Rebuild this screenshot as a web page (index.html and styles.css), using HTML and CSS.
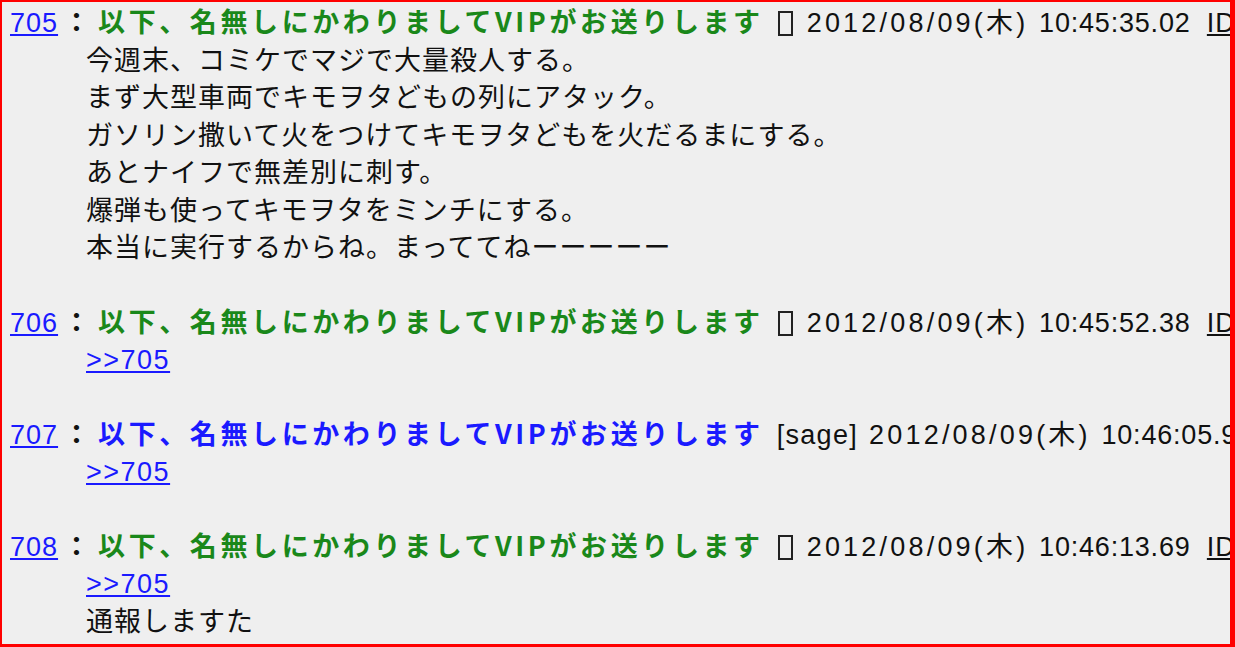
FILE: index.html
```
<!DOCTYPE html>
<html>
<head>
    <title>VIP スレ</title>
    <meta charset="utf-8">
    <link rel="stylesheet" href="styles.css">
</head>
<body>
    <div class="thread">
        <dl>
            <dt><a href="#" class="num">705</a><span class="colon">：</span><b class="name">以下、名無しにかわりましてVIPがお送りします</b><span class="tofu"></span><span class="date"><span class="day">2012/08/09(木) </span>10:45:35.02 <span class="id">ID:Kx9mQ2rT0</span></span></dt>
            <dd>
                今週末、コミケでマジで大量殺人する。<br>
                まず大型車両でキモヲタどもの列にアタック。<br>
                ガソリン撒いて火をつけてキモヲタどもを火だるまにする。<br>
                あとナイフで無差別に刺す。<br>
                爆弾も使ってキモヲタをミンチにする。<br>
                本当に実行するからね。まっててねーーーーー
            </dd>

            <dt><a href="#" class="num">706</a><span class="colon">：</span><b class="name">以下、名無しにかわりましてVIPがお送りします</b><span class="tofu"></span><span class="date"><span class="day">2012/08/09(木) </span>10:45:52.38 <span class="id">ID:p3WvZ7nL0</span></span></dt>
            <dd>
                <a href="#" class="anchor">&gt;&gt;705</a>
            </dd>

            <dt><a href="#" class="num">707</a><span class="colon">：</span><a href="#" class="name sage">以下、名無しにかわりましてVIPがお送りします</a><span class="mail">[sage]</span><span class="date"><span class="day">2012/08/09(木) </span>10:46:05.91 <span class="id">ID:Hq4sYc8e0</span></span></dt>
            <dd>
                <a href="#" class="anchor">&gt;&gt;705</a>
            </dd>

            <dt><a href="#" class="num">708</a><span class="colon">：</span><b class="name">以下、名無しにかわりましてVIPがお送りします</b><span class="tofu"></span><span class="date"><span class="day">2012/08/09(木) </span>10:46:13.69 <span class="id">ID:Bd6tRw1m0</span></span></dt>
            <dd>
                <a href="#" class="anchor">&gt;&gt;705</a><br>
                通報しますた
            </dd>
        </dl>
    </div>
</body>
</html>
```

FILE: styles.css
```
body {
    margin: 0;
    background-color: #efefef;
    font-family: "Noto Sans CJK JP", "Liberation Sans", sans-serif;
}

.thread {
    box-sizing: border-box;
    width: 1235px;
    height: 647px;
    overflow: hidden;
    border: 2px solid #ff0000;
    border-right-width: 5px;
    border-bottom-width: 3px;
    background-color: #efefef;
    color: #111;
    font-size: 27px;
    line-height: 37.5px;
}

dl {
    margin: 0;
}

dt {
    height: 37.5px;
    white-space: nowrap;
    padding-left: 8px;
}

dd {
    margin: 0 0 37px 84px;
    letter-spacing: 1px;
    white-space: nowrap;
}

a {
    color: #1a1aff;
}

.num {
    font-family: "Liberation Sans", sans-serif;
    letter-spacing: 1px;
    line-height: 20px;
}

.colon {
    margin: 0 8px 0 5px;
    font-weight: bold;
}

.name {
    color: #1a881a;
    font-weight: bold;
    letter-spacing: 3.6px;
}

.name.sage {
    color: #1a1aff;
    text-decoration: none;
}

.tofu {
    display: inline-block;
    box-sizing: border-box;
    width: 15px;
    height: 25px;
    margin: 0 14px 0 14px;
    border: 2px solid #222;
    vertical-align: -4px;
}

.mail {
    margin: 0 11px 0 13px;
    font-family: "Liberation Sans", sans-serif;
    letter-spacing: 1.3px;
    line-height: 20px;
}

.date {
    font-family: "Liberation Sans", "Noto Sans CJK JP", sans-serif;
    letter-spacing: 0.8px;
    line-height: 20px;
}

.day {
    letter-spacing: 3.2px;
}

.id {
    margin-left: 8px;
    text-decoration: underline;
}

.anchor {
    font-family: "Liberation Sans", sans-serif;
    letter-spacing: 1.5px;
    line-height: 20px;
}
```
